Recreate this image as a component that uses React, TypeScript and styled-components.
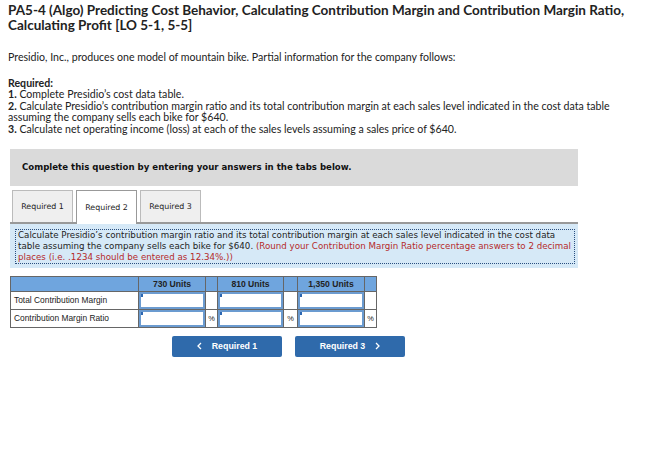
import React from 'react';
import styled, { createGlobalStyle } from 'styled-components';

const Global = createGlobalStyle`
  html, body { margin: 0; padding: 0; background: #fff; }
  * { box-sizing: border-box; }
`;

const Page = styled.div`
  padding: 3px 8px 0 8px;
  font-family: Lato, "Liberation Sans", sans-serif;
  color: #222;
`;

const Title = styled.h1`
  margin: 0;
  font-size: 13.5px;
  line-height: 14.5px;
  font-weight: 700;
  color: #222;
`;

const Para = styled.p`
  margin: 0;
  font-size: 10.6px;
  line-height: 11.6px;
`;

const Intro = styled(Para)`
  margin-top: 20px;
`;

const ReqBlock = styled.div`
  margin-top: 14px;
`;

const Question = styled.div`
  margin: 13px 0 0 2px;
  width: 568px;
`;

const Banner = styled.div`
  background: #dadada;
  height: 37px;
  display: flex;
  align-items: center;
  padding-left: 12px;
  font-family: "DejaVu Sans", Verdana, sans-serif;
  font-size: 8.6px;
  font-weight: 700;
  color: #111;
`;

const Tabs = styled.div`
  display: flex;
  gap: 3px;
  padding-left: 2px;
  margin-top: 4px;
`;

const Tab = styled.div<{ $active?: boolean }>`
  width: 61px;
  height: ${p => (p.$active ? '34px' : '32px')};
  margin-bottom: ${p => (p.$active ? '-2px' : '0')};
  display: flex;
  align-items: center;
  justify-content: center;
  background: ${p => (p.$active ? '#fff' : '#efefef')};
  border: 1px solid ${p => (p.$active ? '#999' : '#bbb')};
  border-bottom: none;
  font-family: "DejaVu Sans", Verdana, sans-serif;
  font-size: 7.9px;
  color: #222;
  position: relative;
  z-index: 1;
`;

const Panel = styled.div`
  border-top: 2px solid #999;
  background: #d6e9f7;
  padding: 5px 3px 4px 5px;
`;

const Instruction = styled.div`
  border: 1px dotted #2a4f80;
  padding: 0 2px;
  font-family: "DejaVu Sans", Verdana, sans-serif;
  font-size: 8.7px;
  line-height: 11px;
  color: #222;
  white-space: nowrap;
`;

const Red = styled.span`
  color: #b52a2a;
`;

const Table = styled.table`
  margin-top: 8px;
  border-collapse: collapse;
  font-family: "Liberation Sans", Arial, sans-serif;
  font-size: 8.4px;
  color: #222;
`;

const Th = styled.th<{ $w: number }>`
  width: ${p => p.$w}px;
  height: 15px;
  background: #6fa5de;
  border: 1px solid #666;
  font-weight: 700;
  font-size: 8.6px;
  padding: 0;
  text-align: center;
  vertical-align: middle;
`;

const Label = styled.td`
  height: 17px;
  border: 1px solid #666;
  padding: 0 0 0 3px;
  white-space: nowrap;
`;

const Cell = styled.td`
  border: 1px solid #666;
  padding: 0;
  height: 17px;
`;

const Unit = styled(Cell)`
  text-align: center;
  font-size: 7.4px;
`;

const InputBox = styled.div`
  height: 17px;
  border: 2px solid #6b9bd0;
  background: #fff;
  position: relative;
  &::before {
    content: '';
    position: absolute;
    left: 0;
    top: 0;
    width: 2px;
    height: 3px;
    background: #2d67b1;
  }
`;

const Nav = styled.div`
  display: flex;
  gap: 13px;
  margin: 8px 0 0 162px;
`;

const NavButton = styled.div`
  width: 110px;
  height: 21px;
  background: #2f6aab;
  color: #fff;
  border-radius: 2px;
  display: flex;
  align-items: center;
  justify-content: center;
  gap: 10px;
  font-family: "Liberation Sans", Arial, sans-serif;
  font-weight: 700;
  font-size: 8.8px;
`;

const Chev = ({ dir }: { dir: 'l' | 'r' }) => (
  <svg width="5" height="8" viewBox="0 0 5 8" fill="none">
    <path
      d={dir === 'l' ? 'M4 1 L1 4 L4 7' : 'M1 1 L4 4 L1 7'}
      stroke="#fff"
      strokeWidth="1.3"
    />
  </svg>
);

const levels = ['730 Units', '810 Units', '1,350 Units'];

export default function App() {
  return (
    <Page>
      <Global />
      <Title>
        PA5-4 (Algo) Predicting Cost Behavior, Calculating Contribution Margin and Contribution Margin Ratio,
        <br />
        Calculating Profit [LO 5-1, 5-5]
      </Title>
      <Intro>Presidio, Inc., produces one model of mountain bike. Partial information for the company follows:</Intro>
      <ReqBlock>
        <Para><b>Required:</b></Para>
        <Para><b>1.</b> Complete Presidio’s cost data table.</Para>
        <Para>
          <b>2.</b> Calculate Presidio’s contribution margin ratio and its total contribution margin at each sales level indicated in the cost data table
          <br />
          assuming the company sells each bike for $640.
        </Para>
        <Para><b>3.</b> Calculate net operating income (loss) at each of the sales levels assuming a sales price of $640.</Para>
      </ReqBlock>

      <Question>
        <Banner>Complete this question by entering your answers in the tabs below.</Banner>
        <Tabs>
          <Tab>Required 1</Tab>
          <Tab $active>Required 2</Tab>
          <Tab>Required 3</Tab>
        </Tabs>
        <Panel>
          <Instruction>
            Calculate Presidio’s contribution margin ratio and its total contribution margin at each sales level indicated in the cost data
            <br />
            table assuming the company sells each bike for $640. <Red>(Round your Contribution Margin Ratio percentage answers to 2 decimal</Red>
            <br />
            <Red>places (i.e. .1234 should be entered as 12.34%.))</Red>
          </Instruction>
        </Panel>

        <Table>
          <thead>
            <tr>
              <Th $w={128}></Th>
              <Th $w={67}>{levels[0]}</Th>
              <Th $w={12}></Th>
              <Th $w={66}>{levels[1]}</Th>
              <Th $w={14}></Th>
              <Th $w={67}>{levels[2]}</Th>
              <Th $w={12}></Th>
            </tr>
          </thead>
          <tbody>
            <tr>
              <Label>Total Contribution Margin</Label>
              {levels.map(l => (
                <React.Fragment key={l}>
                  <Cell><InputBox /></Cell>
                  <Unit></Unit>
                </React.Fragment>
              ))}
            </tr>
            <tr>
              <Label>Contribution Margin Ratio</Label>
              {levels.map(l => (
                <React.Fragment key={l}>
                  <Cell><InputBox /></Cell>
                  <Unit>%</Unit>
                </React.Fragment>
              ))}
            </tr>
          </tbody>
        </Table>

        <Nav>
          <NavButton><Chev dir="l" /> Required 1</NavButton>
          <NavButton>Required 3 <Chev dir="r" /></NavButton>
        </Nav>
      </Question>
    </Page>
  );
}
